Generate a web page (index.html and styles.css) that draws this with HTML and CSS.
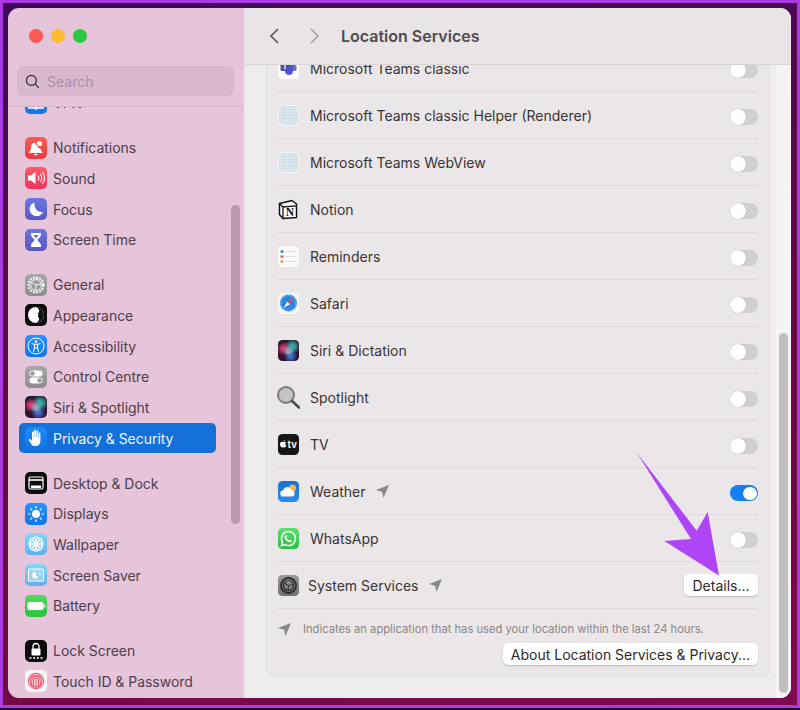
FILE: index.html
```html
<!DOCTYPE html>
<html lang="en">
<head>
<meta charset="utf-8">
<title>Location Services</title>
<link rel="stylesheet" href="styles.css">
</head>
<body>
<div class="frame">
<div class="window">
<aside class="sidebar">
  <div class="lights"><i class="light red"></i><i class="light yellow"></i><i class="light green"></i></div>
  <div class="search">
    <svg class="search-icon" viewBox="0 0 16 16"><circle cx="6.8" cy="6.8" r="5.3"/><path d="M10.8 10.8l4 4"/></svg>
    <span>Search</span>
  </div>
  <nav class="side-scroll">
    <div class="side-list">
      <div class="group">
        <a class="item"><span class="ic bg-blue"><svg viewBox="0 0 22 22"><circle cx="11" cy="9" r="6" fill="none" stroke="#fff" stroke-width="1.4"/><path d="M3 16h16M11 12v6" stroke="#fff" stroke-width="1.4"/></svg></span>VPN</a>
      </div>
      <div class="group">
        <a class="item"><span class="ic bg-red"><svg viewBox="0 0 22 22"><path d="M10 5.500c-2.800.4-4 2.600-4 5 0 2.300-.8 3.500-2 4.800v.7h13.500v-.7c-1.200-1.200-1.900-2.300-2-3.800-2.500-.2-4.500-2.800-5.500-6z" fill="#fff"/><circle cx="14.500" cy="6.500" r="2.600" fill="#fff"/><path d="M9 17h3.500a1.800 1.800 0 0 1-3.500 0z" fill="#fff"/></svg></span>Notifications</a>
        <a class="item"><span class="ic bg-pink"><svg viewBox="0 0 22 22"><path d="M3 8.500h3l4.500-3.500v12L6 13.500H3z" fill="#fff"/><path d="M13 8.500c1 1.500 1 3.500 0 5M15.300 6.800c1.800 2.600 1.800 5.800 0 8.400M17.500 5c2.500 3.600 2.500 8.400 0 12" fill="none" stroke="#fff" stroke-width="1.100"/></svg></span>Sound</a>
        <a class="item"><span class="ic bg-indigo"><svg viewBox="0 0 22 22"><path d="M9.500 4.500a7 7 0 1 0 8.500 9.500c-4.800 1-9.500-3.500-8.500-9.500z" fill="#fff"/></svg></span>Focus</a>
        <a class="item"><span class="ic bg-indigo"><svg viewBox="0 0 22 22"><path d="M6 4h10v1.500c0 2.500-3 4-3.500 5.500.5 1.500 3.500 3 3.500 5.500V18H6v-1.500c0-2.500 3-4 3.500-5.500C9 9.500 6 8 6 5.500z" fill="#fff"/><path d="M8.500 6h5c-.3 1.300-1.700 2.300-2.500 3.300-.8-1-2.200-2-2.500-3.300z" fill="#6a70d8"/></svg></span>Screen Time</a>
      </div>
      <div class="group">
        <a class="item"><span class="ic bg-gray"><svg viewBox="0 0 22 22"><g fill="none" stroke="#fff"><circle cx="11" cy="11" r="7.500" stroke-width="1.800" stroke-dasharray="2 1.200"/><circle cx="11" cy="11" r="5.500" stroke-width=".9"/><path d="M11 11L5.800 8M11 11l5.200-1M11 11l-.5 5.500" stroke-width=".9"/></g></svg></span>General</a>
        <a class="item"><span class="ic bg-black"><svg viewBox="0 0 22 22"><circle cx="11" cy="11" r="8" fill="#fff"/><path d="M11 3a8 8 0 0 1 0 16c2.500-1.500 3.500-3 3-5-.5-1.500-3-1.500-3-3 0-1.500 2.500-1.500 3-3 .5-2-.5-3.700-3-5z" fill="#111"/><circle cx="11" cy="11" r="2.400" fill="#fff"/></svg></span>Appearance</a>
        <a class="item"><span class="ic bg-blue"><svg viewBox="0 0 22 22"><g fill="none" stroke="#fff"><circle cx="11" cy="11" r="8" stroke-width="1"/><path d="M6.500 8.500l3 .8v3.200L8.500 17M15.500 8.500l-3 .8v3.200l1 4.500M9.500 9.300h3M11 13l-1 0m1 0h1" stroke-width="1.100"/></g><circle cx="11" cy="6.500" r="1.200" fill="#fff"/></svg></span>Accessibility</a>
        <a class="item"><span class="ic bg-gray"><svg viewBox="0 0 22 22"><rect x="4.500" y="4.500" width="13" height="6" rx="3" fill="#fff"/><circle cx="7.500" cy="7.500" r="2.200" fill="#999"/><rect x="4.500" y="11.500" width="13" height="6" rx="3" fill="#fff"/><circle cx="14.500" cy="14.500" r="2.200" fill="#999"/></svg></span>Control Centre</a>
        <a class="item"><span class="ic bg-siri"></span>Siri &amp; Spotlight</a>
        <a class="item selected"><span class="ic bg-blue"><svg viewBox="0 0 22 22"><path d="M8 19c-1.500-1-2.500-3.500-4-5.500-.8-1.100.6-2.100 1.500-1.200L7 14V5.500c0-1.300 1.800-1.300 1.800 0V10h.4V3.800c0-1.300 1.900-1.300 1.900 0V10h.4V4.500c0-1.300 1.800-1.300 1.800 0V10.500h.4V6.500c0-1.200 1.700-1.200 1.700 0V14c0 2.500-1.400 5-4.400 5z" fill="#fff"/></svg></span>Privacy &amp; Security</a>
      </div>
      <div class="group">
        <a class="item"><span class="ic bg-black"><svg viewBox="0 0 22 22"><rect x="4" y="5" width="14" height="12" rx="1.500" fill="none" stroke="#fff" stroke-width="1.200"/><path d="M4 8h14" stroke="#fff" stroke-width="1.600"/><rect x="6" y="13.500" width="10" height="2.500" fill="#fff"/></svg></span>Desktop &amp; Dock</a>
        <a class="item"><span class="ic bg-blue"><svg viewBox="0 0 22 22"><circle cx="11" cy="11" r="4" fill="#fff"/><path d="M11 3v2.500M11 16.500V19M3 11h2.500M16.500 11H19M5.300 5.300l1.800 1.800M14.900 14.900l1.800 1.800M5.300 16.700l1.800-1.800M14.900 7.100l1.800-1.800" stroke="#fff" stroke-width="1.200"/></svg></span>Displays</a>
        <a class="item"><span class="ic bg-sky"><svg viewBox="0 0 22 22"><g fill="none" stroke="#fff" stroke-width="1.100"><circle cx="11" cy="6.800" r="3"/><circle cx="11" cy="15.200" r="3"/><circle cx="6.800" cy="11" r="3"/><circle cx="15.200" cy="11" r="3"/><circle cx="8" cy="8" r="3"/><circle cx="14" cy="8" r="3"/><circle cx="8" cy="14" r="3"/><circle cx="14" cy="14" r="3"/></g></svg></span>Wallpaper</a>
        <a class="item"><span class="ic bg-sky"><svg viewBox="0 0 22 22"><rect x="3.500" y="5" width="15" height="12" rx="1" fill="#dff2fd" fill-opacity=".35" stroke="#fff" stroke-width="1.100"/><path d="M10.500 7.800a3.400 3.400 0 1 0 3 5c-2.200.2-3.700-2.500-3-5z" fill="#fff"/><path d="M15 9v2M14 10h2" stroke="#fff" stroke-width=".7"/></svg></span>Screen Saver</a>
        <a class="item"><span class="ic bg-green"><svg viewBox="0 0 22 22"><rect x="2.500" y="7" width="16" height="8" rx="2" fill="#fff"/><rect x="19" y="9.500" width="1.200" height="3" rx=".6" fill="#fff"/></svg></span>Battery</a>
      </div>
      <div class="group">
        <a class="item"><span class="ic bg-black"><svg viewBox="0 0 22 22"><path d="M8 9V6.500a3 3 0 0 1 6 0V9" fill="none" stroke="#fff" stroke-width="1.300"/><rect x="6.500" y="8.500" width="9" height="7" rx="1.200" fill="#fff"/><g fill="#fff"><circle cx="5.500" cy="18" r="1"/><circle cx="9.200" cy="18" r="1"/><circle cx="12.800" cy="18" r="1"/><circle cx="16.500" cy="18" r="1"/></g></svg></span>Lock Screen</a>
        <a class="item"><span class="ic bg-white"><svg viewBox="0 0 22 22"><g fill="none" stroke="#ee5a73" stroke-width="1.150"><circle cx="11" cy="11" r="7.600"/><circle cx="11" cy="11" r="6"/><path d="M6.800 15V10.500a4.200 4.200 0 0 1 8.400 0V16"/><path d="M8.600 16.500V10.700a2.400 2.400 0 0 1 4.800 0V17"/><path d="M11 18V10"/></g></svg></span>Touch ID &amp; Password</a>
      </div>
    </div>
  </nav>
  <div class="side-thumb"></div>
</aside>

<main class="main">
  <header class="bar">
    <svg class="chev" viewBox="0 0 12 18"><path d="M10 2L3 9l7 7"/></svg>
    <svg class="chev off" viewBox="0 0 12 18"><path d="M2 2l7 7-7 7"/></svg>
    <h1>Location Services</h1>
  </header>
  <div class="body">
    <div class="scroll">
      <section class="card">
        <div class="row"><span class="app"><svg viewBox="0 0 21 21"><rect width="21" height="21" rx="4.500" fill="#fff"/><circle cx="15" cy="5" r="1.800" fill="#6b70c4"/><rect x="11" y="7" width="7.500" height="6" rx="1.500" fill="#6b70c4"/><path d="M7 7h8v6a4 4 0 0 1-8 0z" fill="#5059c9"/><rect x="2.500" y="4" width="9" height="9" rx="1" fill="#4a4fb5"/><path d="M4.500 6h5M7 6v5.500" stroke="#fff" stroke-width="1.200"/></svg></span><span class="name">Microsoft Teams classic</span><span class="toggle"></span></div>
        <div class="row"><span class="app tile"></span><span class="name">Microsoft Teams classic Helper (Renderer)</span><span class="toggle"></span></div>
        <div class="row"><span class="app tile"></span><span class="name">Microsoft Teams WebView</span><span class="toggle"></span></div>
        <div class="row"><span class="app"><svg viewBox="0 0 21 21"><path d="M1.500 4.500L14 1.500l4.500 3.500v13.500L5 19.500l-3.500-4z" fill="#fff" stroke="#111" stroke-width="1.500" stroke-linejoin="round"/><path d="M1.500 4.500L5 8l13.500-1.200M5 8v11.500" fill="none" stroke="#111" stroke-width="1.300"/><text x="11.800" y="16.500" class="notion-n">N</text></svg></span><span class="name">Notion</span><span class="toggle"></span></div>
        <div class="row"><span class="app"><svg viewBox="0 0 21 21"><rect width="21" height="21" rx="4.500" fill="#fbfafa"/><circle cx="4" cy="5.500" r="1.600" fill="#3a85d8"/><circle cx="4" cy="10.500" r="1.600" fill="#e8626a"/><circle cx="4" cy="15.500" r="1.600" fill="#ef9a4d"/><path d="M7.500 5.500h11M7.500 10.500h11M7.500 15.500h11" stroke="#d5d3d4" stroke-width=".8"/></svg></span><span class="name">Reminders</span><span class="toggle"></span></div>
        <div class="row"><span class="app"><svg viewBox="0 0 21 21"><rect width="21" height="21" rx="4.500" fill="#f7f6f7"/><circle cx="10.500" cy="10" r="8.500" fill="#2c86e8"/><circle cx="10.500" cy="10" r="7.400" fill="none" stroke="#cfe4fa" stroke-width="1" stroke-dasharray=".7 1"/><path d="M15.500 5L9.200 8.700 11.800 11.300z" fill="#ef4c45"/><path d="M5.500 15l3.700-6.300 2.600 2.600z" fill="#fff"/></svg></span><span class="name">Safari</span><span class="toggle"></span></div>
        <div class="row"><span class="app bg-siri"></span><span class="name">Siri &amp; Dictation</span><span class="toggle"></span></div>
        <div class="row"><span class="app wide"><svg viewBox="0 0 24 24"><circle cx="10" cy="10" r="8" fill="#c4c3c4" stroke="#7d7c7d" stroke-width="2"/><path d="M16 16l7 6.500" stroke="#4d4c4d" stroke-width="2.600" stroke-linecap="round"/></svg></span><span class="name">Spotlight</span><span class="toggle"></span></div>
        <div class="row"><span class="app tv"><svg class="apple" viewBox="0 0 10 12"><path d="M7.200 0c.1 1-.9 2.300-2.200 2.300C4.900 1.200 6 .1 7.200 0zM5 3c.6 0 1.200-.5 2.200-.5.700 0 1.600.4 2.100 1.200-1.800 1-1.500 3.600.5 4.300C9.300 9.500 8.300 11.500 7 11.500c-.7 0-1.100-.4-1.900-.4s-1.200.4-1.900.4C1.700 11.500 0 8.700 0 6.300 0 3.900 1.500 2.600 3 2.600c.8 0 1.500.4 2 .4z"/></svg><span>tv</span></span><span class="name">TV</span><span class="toggle"></span></div>
        <div class="row"><span class="app weather"><svg viewBox="0 0 21 21"><circle cx="14.500" cy="7" r="3.500" fill="#f8b33c"/><path d="M5.500 15.500a3 3 0 0 1-.3-6 4.200 4.200 0 0 1 8-.8 3.500 3.500 0 0 1 1 6.800z" fill="#fff"/></svg></span><span class="name">Weather</span><svg class="loc" viewBox="0 0 14 14"><path d="M14 0L0 5.500l6.500 1.800L8 14z"/></svg><span class="toggle on"></span></div>
        <div class="row"><span class="app wa"><svg viewBox="0 0 21 21"><path d="M10.500 3.500a7 7 0 0 0-6 10.600l-1 3.500 3.600-1a7 7 0 1 0 3.400-13.100z" fill="none" stroke="#fff" stroke-width="1.500"/><path d="M8 7c.5 0 .7 1.500 1 2 .1.400-.6.800-.5 1.100.5 1 1.300 1.700 2.300 2.200.3.100.8-.7 1.100-.6l1.800 1c.2 1-1 1.800-2 1.600-2.800-.5-5-3-5.200-5.300C6.500 8 7.300 7 8 7z" fill="#fff"/></svg></span><span class="name">WhatsApp</span><span class="toggle"></span></div>
        <div class="row"><span class="app sys"><svg viewBox="0 0 21 21"><g fill="none"><circle cx="10.500" cy="10.500" r="7.500" stroke="#2e2e2f" stroke-width="2"/><circle cx="10.500" cy="10.500" r="5" stroke="#2e2e2f" stroke-width="1.200"/><path d="M10.500 10.500L6 8M10.500 10.500l4.500-1M10.500 10.500l-.4 5" stroke="#2e2e2f"/></g></svg></span><span class="name near">System Services</span><svg class="loc" viewBox="0 0 14 14"><path d="M14 0L0 5.500l6.500 1.800L8 14z"/></svg><button class="btn details">Details...</button></div>
        <div class="foot">
          <p class="note"><svg class="loc small" viewBox="0 0 14 14"><path d="M14 0L0 5.500l6.500 1.800L8 14z"/></svg>Indicates an application that has used your location within the last 24 hours.</p>
          <button class="btn">About Location Services &amp; Privacy...</button>
        </div>
      </section>
    </div>
    <div class="track"><div class="thumb"></div></div>
  </div>
</main>
</div>
<svg class="annot" viewBox="0 0 800 710"><path d="M637 453L696.700 530.700 707.700 512 719 575.500 664.300 541 691 539z"/></svg>
</div>
</body>
</html>
```

FILE: styles.css
```css
* { box-sizing: border-box; }
html, body { margin: 0; height: 710px; background: #1c0a24; overflow: hidden; }
body { font-family: Inter, "Liberation Sans", sans-serif; }
.frame {
  position: relative;
  width: 800px; height: 708px;
  border: 3px solid #a93be2;
  padding: 5px 6px 7px 5px;
  background: linear-gradient(170deg, #3e085c 0%, #5a0a48 35%, #6c0a3f 75%, #7f0b50 100%);
}
.window { display: flex; height: 100%; border-radius: 11px; overflow: hidden; }

.sidebar {
  position: relative;
  flex: none; width: 237px;
  display: flex; flex-direction: column;
  background: #e6c4da;
  border-right: 1px solid #efe3ea;
}
.lights { display: flex; gap: 8.500px; padding: 21px 0 0 21px; height: 58px; }
.light { width: 13.500px; height: 13.500px; border-radius: 50%; }
.light.red { background: #f95a58; }
.light.yellow { background: #fdbb2e; }
.light.green { background: #2bc840; }
.search {
  display: flex; align-items: center;
  margin-left: 9px; width: 217px; height: 30px;
  border-radius: 6px; background: #d9b8ce;
  color: #a98fa6; font-size: 14px; padding-left: 8px; gap: 7px; flex: none;
}
.search-icon { width: 15px; height: 15px; fill: none; stroke: #2f2a30; stroke-width: 1.300; }
.side-scroll { flex: 1; min-height: 0; overflow: hidden; margin-top: 10px; border-top: 1px solid #d6b4ca; }
.side-list { margin-top: -19.500px; padding-left: 11px; }
.group { margin-bottom: 14.330px; }
.item {
  display: flex; align-items: center; gap: 6px;
  width: 197px; height: 30.670px; padding-left: 6px;
  font-size: 14px; letter-spacing: -.03px; color: #4c3e4b; border-radius: 5px;
}
.item.selected { background: #1470d8; color: #f1f3fb; }
.ic { flex: none; width: 22px; height: 22px; border-radius: 5px; display: block; }
.ic svg, .app svg { display: block; width: 100%; height: 100%; }
.bg-red { background: linear-gradient(#fb5c52, #ee3a3f); }
.bg-pink { background: linear-gradient(#fb5c66, #f4305c); }
.bg-indigo { background: linear-gradient(#6a78e0, #5757c2); }
.bg-gray { background: linear-gradient(#aaa9aa, #8e8d8e); }
.bg-black { background: #0c0c0c; }
.bg-blue { background: linear-gradient(#2a93fb, #0e76ee); }
.bg-sky { background: linear-gradient(#86d4fa, #5fb1ec); }
.bg-green { background: linear-gradient(#4fdc5e, #2cc13f); }
.bg-white { background: #f6f3f5; }
.bg-siri {
  background:
    radial-gradient(circle at 50% 52%, #8ea2b5 0 14%, transparent 34%),
    radial-gradient(circle at 28% 42%, #d93a72 0 10%, transparent 36%),
    radial-gradient(circle at 68% 32%, #35a7a0 0 12%, transparent 38%),
    radial-gradient(circle at 60% 76%, #3a6fd0 0 8%, transparent 34%),
    linear-gradient(#1e1a28, #38102e);
}
.selected .ic { background: linear-gradient(#2088f5, #0f74e6); }
.side-thumb { position: absolute; left: 223px; top: 197px; width: 9px; height: 319px; border-radius: 4.500px; background: #bb98ae; }

.main { flex: 1; min-width: 0; display: flex; flex-direction: column; background: #efecee; }
.bar {
  flex: none; height: 57px;
  display: flex; align-items: center;
  background: #e9e5e7;
  border-bottom: 1px solid #d9d5d7;
  padding-left: 23px;
  position: relative; z-index: 1;
}
.chev { width: 12px; height: 18px; fill: none; stroke: #5c585a; stroke-width: 1.700; margin-right: 29px; }
.chev.off { stroke: #a5a2a4; margin-right: 20px; }
.bar h1 { margin: 0; font-size: 16px; font-weight: 600; color: #4f4b4d; }
.body { flex: 1; min-height: 0; display: flex; }
.scroll { flex: 1; min-width: 0; overflow: hidden; padding: 0 6px 0 21px; }
.track { flex: none; width: 15px; padding: 268px 3px 0 3px; background: #f5f4f4; }
.thumb { height: 360px; border-radius: 4.500px; background: #bfbfbf; }

.card {
  margin-top: -21px;
  border: 1px solid #e2dfe0;
  border-radius: 7px;
  background: #ebe7e9;
  padding: 0 11px 0 10px;
}
.row {
  display: flex; align-items: center;
  height: 47px;
  border-bottom: 1px solid #dedadc;
  font-size: 14px; color: #383435;
}
.app { flex: none; width: 21px; height: 21px; margin: 0 11px 0 1px; border-radius: 4.500px; display: block; }
.app.wide { width: 24px; height: 24px; margin: 0 10px 0 -1px; }
.tile {
  border: 1.500px solid #f7f7f7;
  background:
    repeating-linear-gradient(0deg, #cfdde6 0 1px, transparent 1px 3px),
    repeating-linear-gradient(90deg, #cfdde6 0 1px, transparent 1px 3px),
    #e0e9ee;
}
.tv { background: #161616; display: flex; align-items: center; justify-content: center; gap: 1px; color: #f2f2f2; font-size: 9.500px; font-weight: 700; }
.app.tv svg.apple { width: 6.500px; height: 8px; fill: #f2f2f2; }
.weather { background: linear-gradient(#1b6fd0, #2b8eea); }
.wa { background: linear-gradient(#5fe06e, #29bf45); }
.sys { background: linear-gradient(#9c9b9c, #6f6e6f); margin-right: 9px; }
.notion-n { font-family: "Liberation Serif", serif; font-size: 11.500px; font-weight: 700; text-anchor: middle; fill: #111; }
.name { margin-top: 1px; }
.loc { flex: none; width: 13px; height: 13px; fill: #8a8788; margin-left: 10px; }
.toggle {
  position: relative;
  margin: 4px 0 0 auto;
  flex: none; width: 28px; height: 16px;
  border-radius: 8px; background: #d1cfd0;
}
.toggle::after {
  content: ""; position: absolute; left: 0; top: 0;
  width: 16px; height: 16px; border-radius: 50%;
  background: #fff; box-shadow: 0 0 1px rgba(0,0,0,.3);
}
.toggle.on { background: #1480f4; }
.toggle.on::after { left: 13px; top: 1.500px; width: 13.500px; height: 13.500px; }
.btn {
  font: inherit; font-size: 14px; color: #2c292a;
  background: #fff; border: 0; border-radius: 5px;
  height: 22px; padding: 0 8px;
  box-shadow: 0 1px 1.500px rgba(0,0,0,.2);
}
.details { margin-left: auto; width: 74px; padding: 0; }
.foot { display: flex; flex-direction: column; align-items: flex-end; height: 67px; }
.note {
  align-self: stretch;
  display: flex; align-items: center;
  margin: 12px 0 6px; height: 16px;
  font-size: 11.200px; color: #8a8688;
}
.loc.small { margin: 0 12px 0 1px; }

.annot { position: absolute; left: -3px; top: -3px; width: 800px; height: 710px; pointer-events: none; }
.annot path { fill: #b044f7; }
```
